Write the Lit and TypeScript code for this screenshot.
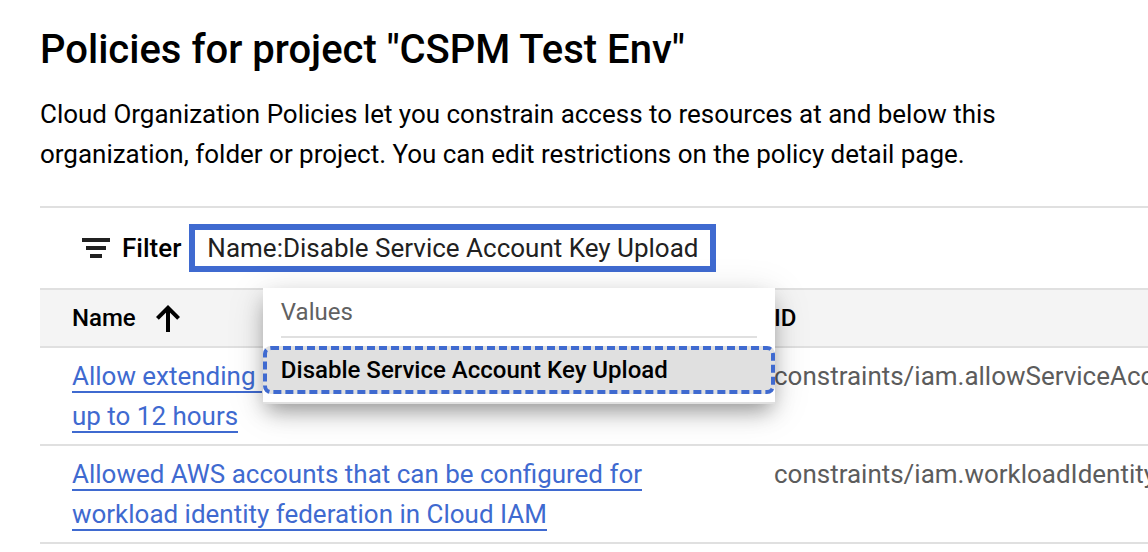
import { LitElement, html, css } from "lit";
import { customElement } from "lit/decorators.js";

@customElement("app-root")
export class AppRoot extends LitElement {
  static styles = css`
    :host { display: block; height: 552px; overflow: hidden; background: #fff; font-family: Roboto, sans-serif; color: #000; font-size: 24px; }
    .page { padding: 28px 0 0 40px; height: 552px; box-sizing: border-box; overflow: hidden; }
    h1 { margin: 0; font-size: 40px; line-height: 44px; font-weight: 500; white-space: nowrap; }
    .intro { margin: 22px 0 32px; line-height: 40px; font-size: 25.98px; white-space: nowrap; }
    .intro span { display: block; }
    .filter { border-top: 2px solid #e0e0e0; height: 80px; display: flex; align-items: center; padding-left: 42px; }
    .label { font-weight: 500; font-size: 26px; margin: 0 8px 0 12px; }
    .field { position: relative; border: 6px solid #3f6ad0; height: 48px; width: 527px; box-sizing: border-box; padding-left: 12px; line-height: 36px; font-size: 26px; white-space: nowrap; color: #212121; }
    .menu { position: absolute; z-index: 2; left: 68px; top: 58px; width: 512px; height: 116px; box-sizing: border-box; background: #fff; border-bottom: 2px solid #e0e0e0; box-shadow: 0 10px 20px -4px rgba(0,0,0,.36), 0 6px 36px rgba(0,0,0,.13); color: #000; font-size: 24px; }
    .caption { margin: 0 18px; height: 48px; line-height: 48px; border-bottom: 2px solid #e0e0e0; color: #616161; }
    .caption span, .option span { margin-left: -0.5px; }
    .option { margin-top: 8px; height: 48px; box-sizing: border-box; line-height: 40px; padding-left: 14px; background: #e0e0e0; font-weight: 500; border: 4px dashed #3f6ad0; border-radius: 8px; }
    .row { display: grid; grid-template-columns: 702px 1fr; padding-left: 32px; border-bottom: 2px solid #e0e0e0; line-height: 40px; white-space: nowrap; height: 96px; }
    .head { background: #f4f4f4; border-top: 2px solid #e0e0e0; height: 56px; line-height: 56px; font-weight: 500; }
    .name { display: flex; align-items: center; gap: 20px; }
    .cell { padding-top: 8px; font-size: 25.98px; }
    .link span { display: table; color: #3f6ad0; }
    .link i { font-style: normal; display: inline-block; line-height: 30px; border-bottom: 2px solid #3f6ad0; }
    .id { color: #5c5c5c; }
  `;
  render() {
    return html`<main class="page">
      <h1>Policies for project "CSPM Test Env"</h1>
      <div class="intro"><span>Cloud Organization Policies let you constrain access to resources at and below this</span><span>organization, folder or project. You can edit restrictions on the policy detail page.</span></div>
      <div class="filter">
        <svg width="28" height="20"><path d="M0 0H28V4H0ZM4 8H24V12H4ZM8 16H20V20H8Z" fill="#212121"/></svg>
        <span class="label">Filter</span>
        <div class="field"><span class="value">Name:Disable Service Account Key Upload</span>
          <div class="menu"><div class="caption"><span>Values</span></div><div class="option"><span>Disable Service Account Key Upload</span></div></div>
        </div>
      </div>
      <div class="row head"><div class="name"><span>Name</span><svg width="24" height="27" viewBox="0 0 24 27"><path d="M12 27V3M1.4 13.4L12 2.8L22.6 13.4" fill="none" stroke="#000" stroke-width="4"/></svg></div><span>ID</span></div>
      <div class="row"><div class="cell link"><span><i>Allow extending&nbsp;</i></span><span><i>up to 12 hours</i></span></div><div class="cell id">constraints/iam.allowServiceAcco</div></div>
      <div class="row"><div class="cell link"><span><i>Allowed AWS accounts that can be configured for</i></span><span><i>workload identity federation in Cloud IAM</i></span></div><div class="cell id">constraints/iam.workloadIdentity</div></div>
    </main>`;
  }
}
